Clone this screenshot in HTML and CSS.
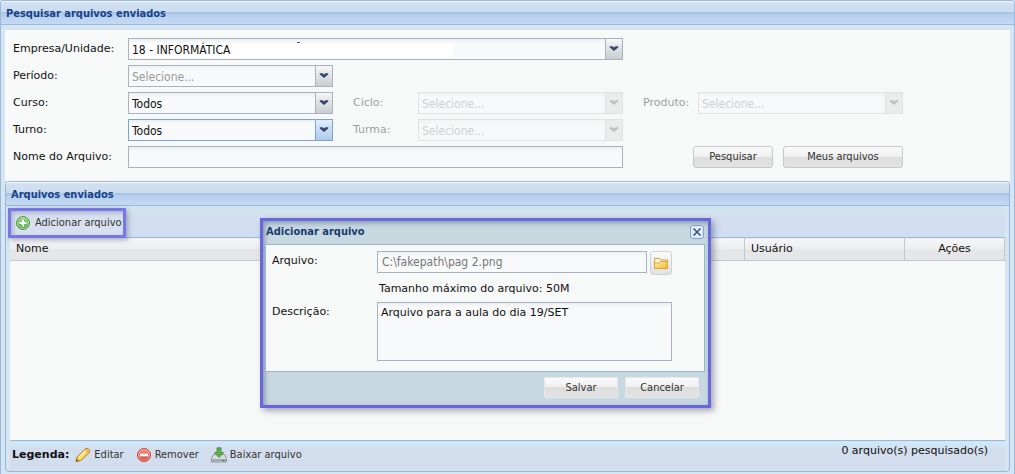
FILE: index.html
```html
<!DOCTYPE html>
<html lang="pt-BR">
<head>
<meta charset="utf-8">
<title>Pesquisar arquivos enviados</title>
<link rel="stylesheet" href="styles.css">
</head>
<body>
<svg class="defs" aria-hidden="true">
  <defs>
    <linearGradient id="g-green" x1="0" y1="0" x2="0" y2="1"><stop offset="0" stop-color="#9ad07f"/><stop offset="1" stop-color="#4fa545"/></linearGradient>
    <linearGradient id="g-red" x1="0" y1="0" x2="0" y2="1"><stop offset="0" stop-color="#f58d7c"/><stop offset="1" stop-color="#d9453a"/></linearGradient>
    <linearGradient id="g-gold" x1="0" y1="0" x2="1" y2="1"><stop offset="0" stop-color="#fff3b0"/><stop offset="1" stop-color="#eeb52c"/></linearGradient>
    <symbol id="i-arrow" viewBox="0 0 17 20"><path d="M4 7h3l1.500 1.500L10 7h3v1.500L8.500 12 4 8.500z" fill="currentColor"/></symbol>
  </defs>
</svg>
<main class="panel outer">
  <h1 class="panel-title">Pesquisar arquivos enviados</h1>
  <div class="outer-body">
    <form class="search">
      <label for="empresa">Empresa/Unidade:</label>
      <span class="combo span-wide"><select id="empresa" class="masked"><option>18 - INFORMÁTICA</option></select><svg class="trigger"><use href="#i-arrow"/></svg></span>

      <label class="row-start" for="periodo">Período:</label>
      <span class="combo hint"><select id="periodo"><option>Selecione...</option></select><svg class="trigger"><use href="#i-arrow"/></svg></span>

      <label class="row-start" for="curso">Curso:</label>
      <span class="combo"><select id="curso"><option>Todos</option></select><svg class="trigger"><use href="#i-arrow"/></svg></span>
      <label class="col-2 off" for="ciclo">Ciclo:</label>
      <span class="combo off"><select id="ciclo" disabled><option>Selecione...</option></select><svg class="trigger"><use href="#i-arrow"/></svg></span>
      <label class="col-3 off" for="produto">Produto:</label>
      <span class="combo off"><select id="produto" disabled><option>Selecione...</option></select><svg class="trigger"><use href="#i-arrow"/></svg></span>

      <label class="row-start" for="turno">Turno:</label>
      <span class="combo focused"><select id="turno"><option>Todos</option></select><svg class="trigger"><use href="#i-arrow"/></svg></span>
      <label class="col-2 off" for="turma">Turma:</label>
      <span class="combo off"><select id="turma" disabled><option>Selecione...</option></select><svg class="trigger"><use href="#i-arrow"/></svg></span>

      <label class="row-start" for="nome">Nome do Arquivo:</label>
      <input id="nome" class="field span-wide" type="text">
      <div class="actions">
        <button class="btn btn-search" type="button">Pesquisar</button>
        <button class="btn btn-mine" type="button">Meus arquivos</button>
      </div>
    </form>

    <section class="panel inner">
      <h2 class="panel-title">Arquivos enviados</h2>
      <div class="inner-body">
        <div class="toolbar">
          <button class="add" type="button">
            <svg class="icon" viewBox="0 0 16 16"><circle cx="8" cy="8" r="6.500" fill="url(#g-green)" stroke="#4c9a45"/><circle cx="8" cy="8" r="5.400" fill="none" stroke="#c5e6b5" stroke-width=".7"/><path d="M8 4.500v7M4.500 8h7" stroke="#fff" stroke-width="2.200"/></svg>
            Adicionar arquivo
          </button>
        </div>
        <table class="files">
          <thead><tr><th>Nome</th><th class="col-user">Usuário</th><th class="col-actions">Ações</th></tr></thead>
        </table>
        <div class="rows"></div>
        <footer class="legend">
          <strong>Legenda:</strong>
          <span class="key">
            <svg class="icon" viewBox="0 0 16 16"><path d="M1 14.500l1-4.500L10.500 1.800q1.500-1.200 3.200.5T14.300 5.500L5.700 13.600z" fill="#fdd257" stroke="#b77b1c"/><path d="M4 10.500l7.500-7.300" stroke="#fff2b0" stroke-width="2"/><path d="M10.300 2.500L13.700 5.900" stroke="#e89a68" stroke-width="1.200"/><path d="M1 14.500l.8-2.600 1.900 1.800z" fill="#7b4e22"/></svg>
            Editar</span>
          <span class="key key-next">
            <svg class="icon" viewBox="0 0 16 16"><circle cx="8" cy="8" r="6.500" fill="url(#g-red)" stroke="#c8463c"/><circle cx="8" cy="8" r="5.400" fill="none" stroke="#ffc2b8" stroke-width=".7"/><path d="M4 8h8" stroke="#fff" stroke-width="2.600"/></svg>
            Remover</span>
          <span class="key key-next">
            <svg class="icon" viewBox="0 0 16 16"><path d="M2.500 7.500h11l2 4v3.500h-15v-3.500z" fill="#d9dde0" stroke="#8d959b"/><path d="M1 12h14v2.500H1z" fill="#a4acb1"/><path d="M11.500 13.500h2" stroke="#4a5459"/><path d="M6 .8h4v4.700h2.500L8 10.500 3.500 5.500H6z" fill="#5fb04e" stroke="#3a8536" stroke-width=".8"/></svg>
            Baixar arquivo</span>
          <span class="count">0 arquivo(s) pesquisado(s)</span>
        </footer>
      </div>
    </section>
  </div>
</main>

<div class="dialog" role="dialog" aria-labelledby="dlg-title">
  <header class="dialog-head">
    <h2 id="dlg-title">Adicionar arquivo</h2>
    <button class="close" type="button" aria-label="Fechar"><svg viewBox="0 0 12 12"><path d="M2.500 2.500l7 7M9.500 2.500l-7 7" stroke="#3b5580" stroke-width="1.600"/></svg></button>
  </header>
  <form class="dialog-body">
    <label for="arquivo">Arquivo:</label>
    <div class="file-row">
      <input id="arquivo" class="field path" type="text" value="C:\fakepath\pag 2.png" readonly>
      <button class="browse" type="button" aria-label="Procurar"><svg class="icon" viewBox="0 0 16 16"><path d="M1.500 13.500v-10h5l1 1.500h7v8.500z" fill="#fff6cf" stroke="#d3a03c"/><path d="M1.500 13.500v-5.500h5l1.500-1.500h6.500v7z" fill="url(#g-gold)" stroke="#d9a53a"/></svg></button>
    </div>
    <p class="note">Tamanho máximo do arquivo: 50M</p>
    <label for="descricao">Descrição:</label>
    <textarea id="descricao" class="field">Arquivo para a aula do dia 19/SET</textarea>
  </form>
  <footer class="dialog-foot">
    <button class="btn" type="button">Salvar</button>
    <button class="btn" type="button">Cancelar</button>
  </footer>
</div>
</body>
</html>
```
FILE: styles.css
```css
:root {
  --wide: "DejaVu Sans", Verdana, sans-serif;
  --narrow: "DejaVu Sans Condensed", Tahoma, sans-serif;
  --line: #99b8dc;
}
* { box-sizing: border-box; }
body {
  margin: 0;
  font: 11px/16px var(--wide);
  color: #111;
  background: #d6e5f2;
}
button, input, select, textarea { font: inherit; color: inherit; margin: 0; }
h1, h2, p { margin: 0; }
.defs { position: absolute; width: 0; height: 0; }
.icon { width: 16px; height: 16px; flex: none; }

.panel { display: flex; flex-direction: column; border: 1px solid var(--line); border-radius: 4px 4px 0 0; background: #d6e5f2; }
.panel-title {
  height: 24px;
  padding-left: 5px;
  font: bold 11px/24px var(--narrow);
  color: #15428b;
  border-top: 1px solid #f3f8fd;
  border-bottom: 1px solid var(--line);
  border-radius: 3px 3px 0 0;
  background: linear-gradient(#d3e1f1 0, #cadcf0 10px, #a9c5e6 10px, #a9c5e6 12px, #b5ceec 12px, #c5d9f3 100%);
}
.outer { min-height: 100vh; border-bottom: 0; }
.outer-body { flex: 1; display: flex; flex-direction: column; padding: 5px 4px 2px; }

.search {
  display: grid;
  grid-template-columns: 115px 205px 20px 65px 205px 20px 55px 205px;
  grid-auto-rows: 22px;
  row-gap: 5px;
  padding: 8px 8px 13px;
  background: #f7f8f8;
}
.search label { line-height: 22px; white-space: nowrap; }
.search .row-start { grid-column: 1; }
.search .col-2 { grid-column: 4; }
.search .col-3 { grid-column: 7; }
.search .span-wide { grid-column: 2 / 6; }
.search .actions { grid-column: 6 / 9; display: flex; justify-content: flex-end; gap: 10px; }
.off { opacity: .4; }

.field, .combo {
  border: 1px solid #a9b3c0;
  background: linear-gradient(#eceff0, #f8f9fa 4px);
}
.field { width: 100%; padding: 0 4px; border-radius: 0; outline: 0; }
.combo { position: relative; display: flex; height: 22px; }
.combo select {
  flex: 1;
  appearance: none;
  padding: 2px 21px 0 3px;
  border: 0;
  background: transparent;
  font: 12px/18px var(--narrow);
  color: #111;
  opacity: 1;
}
.combo .masked {
  background:
    linear-gradient(#555, #555) 168px 3px / 3px 1px no-repeat,
    linear-gradient(#fff, #fff) 0 4px / 324px 15px no-repeat;
}
.trigger {
  position: absolute;
  top: 0;
  right: 0;
  width: 17px;
  height: 20px;
  border-left: 1px solid #a9b3c0;
  background: linear-gradient(#f5f6f7, #c9ccd0);
  color: #34486e;
  pointer-events: none;
}
.combo.hint select { color: #999; }
.focused { border-color: #7ea3cf; }
.focused .trigger { border-color: #7ea3cf; background: linear-gradient(#e3eefa, #adcbed); }
.combo.off { opacity: .5; border-color: #ccc; }
.combo.off select { color: #aaa; }
.combo.off .trigger { border-color: #ccc; background: #dedfe0; color: #888; }

.btn {
  padding: 0;
  border: 1px solid #c6c8ca;
  border-radius: 3px;
  background: linear-gradient(#fafafa, #efefef 50%, #dedede 50%, #e3e3e3);
  font-family: var(--narrow);
  color: #333;
}
.btn-search { width: 80px; }
.btn-mine { width: 120px; }

.inner { flex: 1; border-radius: 4px; }
.inner-body { flex: 1; display: flex; flex-direction: column; padding: 0 4px; }
.toolbar { background: linear-gradient(#d2e4ee, #d2e2ef 8px, #d4ddee 10px, #cfdff2); }
.legend { background: linear-gradient(#d2e5f4 6px, #d3dded 7px, #d1deee); }
.toolbar { height: 31px; margin-left: -2px; padding-top: 2px; }
.add {
  display: flex;
  align-items: center;
  gap: 4px;
  position: relative;
  height: 30px;
  padding: 0 1px 0 4px;
  border: 3px solid #7678e6;
  background: #d8e0ef;
  box-shadow: 2px 2px 5px rgba(60, 70, 110, .4), inset 2px 2px 4px rgba(60, 70, 110, .3);
  font-family: var(--narrow);
  color: #333;
}
.files { width: 100%; table-layout: fixed; border-collapse: collapse; }
.files th {
  height: 23px;
  padding: 0 6px;
  border-top: 1px solid var(--line);
  border-right: 1px solid #c3c7cb;
  border-bottom: 1px solid #c3c7cb;
  background: linear-gradient(#f6f6f7 0, #ebecee 50%, #e4e5e7 50%, #e6e7e8);
  font-weight: normal;
  text-align: left;
}
.files .col-user { width: 160px; }
.files .col-actions { width: 100px; text-align: center; }
.rows { flex: 1; background: #f7f8f8; border-bottom: 1px solid var(--line); }
.legend { display: flex; align-items: center; height: 30px; padding: 0 17px 3px 2px; font-family: var(--narrow); }
.legend strong { font-family: var(--wide); padding-right: 6px; }
.key { display: flex; align-items: center; gap: 3px; color: #333; }
.key-next { margin-left: 12px; }
.count { margin-left: auto; padding-bottom: 8px; font-family: var(--wide); }

.dialog {
  position: absolute;
  left: 260px;
  top: 218px;
  width: 451px;
  padding: 0 3px 0 2px;
  border: 3px solid #6668dc;
  background: #c7d8e1;
  box-shadow: 3px 3px 6px rgba(70, 70, 100, .45), inset 2px 2px 5px rgba(60, 70, 110, .45);
}
.dialog-head { display: flex; align-items: center; justify-content: space-between; height: 23px; padding: 0 1px 2px; }
.dialog-head h2 { font: bold 11px/20px var(--narrow); color: #173c70; }
.close { width: 14px; height: 14px; padding: 0; border: 1px solid #7fa2d2; border-radius: 3px; background: #e2edfa; }
.close svg { display: block; width: 12px; height: 12px; }
.dialog-body {
  display: grid;
  grid-template-columns: 105px 295px;
  grid-template-rows: 24px 27px 59px;
  padding: 6px 6px 10px;
  border: 1px solid #9bb6d3;
  background: #f7f8f8;
}
.dialog-body label { line-height: 20px; }
.file-row { display: flex; gap: 3px; }
.path { height: 22px; font: 12px/20px var(--narrow); color: #777; }
.browse { flex: none; display: grid; place-items: center; width: 22px; height: 24px; padding: 0; border: 1px solid #d0d2d4; border-radius: 3px; background: linear-gradient(#fafafa, #e0e1e2); }
.note { grid-column: 2; padding: 6px 0 0 2px; }
textarea.field { resize: none; padding: 2px 3px; overflow: hidden; }
.dialog-foot { display: flex; justify-content: flex-end; gap: 7px; padding: 5px 6px 7px 0; }
.dialog-foot .btn { width: 74px; height: 21px; border-color: #e4e8eb; border-radius: 1px; }
```
